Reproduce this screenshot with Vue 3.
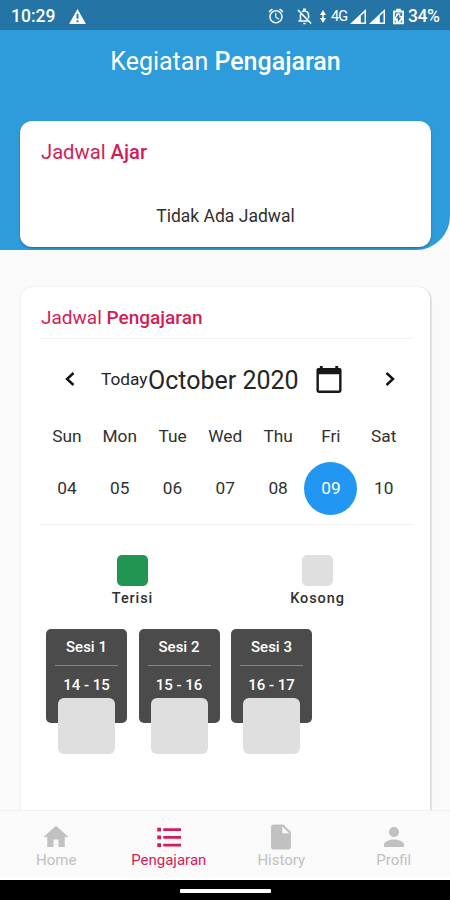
<script setup>
const days = [
  { name: 'Sun', date: '04' },
  { name: 'Mon', date: '05' },
  { name: 'Tue', date: '06' },
  { name: 'Wed', date: '07' },
  { name: 'Thu', date: '08' },
  { name: 'Fri', date: '09', active: true },
  { name: 'Sat', date: '10' },
]
const sessions = [
  { name: 'Sesi 1', time: '14 - 15' },
  { name: 'Sesi 2', time: '15 - 16' },
  { name: 'Sesi 3', time: '16 - 17' },
]
const tabs = [
  { label: 'Home', icon: 'M10 20v-6h4v6h5v-8h3L12 3 2 12h3v8z' },
  {
    label: 'Pengajaran',
    active: true,
    icon: 'M2.600 4.500h3v3h-3zM7.400 4.900h14.200v2.200H7.400zM2.600 10.700h3v3h-3zM7.400 11.100h14.200v2.200H7.400zM2.600 16.900h3v3h-3zM7.400 17.300h14.200v2.200H7.400z',
  },
  { label: 'History', icon: 'M6 2c-1.100 0-2 .9-2 2v16c0 1.100.9 2 2 2h12c1.100 0 2-.9 2-2V8l-6-6H6zm7 7V3.500L18.500 9H13z' },
  { label: 'Profil', icon: 'M12 12c2.210 0 4-1.790 4-4s-1.790-4-4-4-4 1.790-4 4 1.790 4 4 4zm0 2c-2.670 0-8 1.340-8 4v2h16v-2c0-2.660-5.330-4-8-4z' },
]
</script>

<template>
  <div class="screen">
    <div class="status">
      <span class="clock">10:29</span>
      <svg class="warn" viewBox="0 0 18 16"><path d="M9 0 18 16H0z" fill="#fff" /><path d="M8 5h2v5.500H8zM8 12h2v2H8z" fill="#2474a6" /></svg>
      <span class="grow"></span>
      <svg class="alarm" viewBox="0 0 24 24"><path d="M22 5.720l-4.600-3.860-1.290 1.530 4.600 3.860L22 5.720zM7.880 3.390L6.600 1.860 2 5.710l1.290 1.530 4.590-3.850zM12.500 8H11v6l4.750 2.850.75-1.230-4-2.370V8zM12 4c-4.970 0-9 4.030-9 9s4.020 9 9 9a9 9 0 0 0 0-18zm0 16c-3.870 0-7-3.130-7-7s3.130-7 7-7 7 3.130 7 7-3.130 7-7 7z" /></svg>
      <svg class="bell" viewBox="0 0 18 18" fill="none" stroke="#fff" stroke-width="1.600"><path d="M4.700 6.500v7M2.500 13.800h10.500M6.500 4Q7.300 3.300 8.200 3.100V1.300h1.600v1.800q3.500.8 3.500 4.500v3.500M2 2l14 14.500M7.800 16.300h2.400" /></svg>
      <svg class="data" viewBox="0 0 6 13"><path d="M3 0 6 5H0zM3 13 0 8h6zM2.300 4h1.400v5H2.300z" /></svg>
      <span class="net">4G</span>
      <svg v-for="n in 2" :key="n" class="signal" :class="'signal-' + n" viewBox="0 0 16 15"><path d="M0 15 16 0v15zM10.800 7v6.500h3.700V3.500z" fill-rule="evenodd" /></svg>
      <svg class="battery" viewBox="0 0 12 17"><path d="M3.500 0h5v2H11q1 0 1 1v13q0 1-1 1H1q-1 0-1-1V3q0-1 1-1h2.500zM2 4v6l2-5h4v3h2V4zM6.800 5.500 3 10.500h2.300v4L9 9.500H6.800zM2 12v3h1.500zM10 12l-2 3h2z" fill-rule="evenodd" /></svg>
      <span class="percent">34%</span>
    </div>

    <header class="hero">
      <h1>Kegiatan <b>Pengajaran</b></h1>
      <section class="card today-card">
        <h2 class="ajar">Jadwal <b>Ajar</b></h2>
        <p>Tidak Ada Jadwal</p>
      </section>
    </header>

    <main>
      <section class="card schedule">
        <h2 class="teach">Jadwal <b>Pengajaran</b></h2>
        <div class="calendar">
          <div class="month">
            <svg class="chevron" viewBox="0 0 10 14"><path d="M8.500 1 2 7l6.500 6" /></svg>
            <span class="today">Today</span>
            <span class="title">October 2020</span>
            <svg class="cal-icon" viewBox="0 0 26 28"><path d="M3.500 0h3v2h13V0h3v2H24q2 0 2 2v21.500q0 2.500-2.500 2.500h-21Q0 28 0 25.500V4q0-2 2-2h1.500zM2.500 8.500v17h21v-17z" fill-rule="evenodd" /></svg>
            <svg class="chevron next" viewBox="0 0 10 14"><path d="M1.500 1 8 7l-6.500 6" /></svg>
          </div>
          <div class="week">
            <div v-for="d in days" :key="d.name" class="day">
              <span class="name">{{ d.name }}</span>
              <span class="date" :class="{ active: d.active }">{{ d.date }}</span>
            </div>
          </div>
        </div>
        <div class="legend">
          <div><i class="filled"></i><span>Terisi</span></div>
          <div><i></i><span>Kosong</span></div>
        </div>
        <div class="sessions">
          <div v-for="s in sessions" :key="s.name" class="session">
            <span class="s-name">{{ s.name }}</span>
            <span class="s-time">{{ s.time }}</span>
            <i></i>
          </div>
        </div>
      </section>
    </main>

    <nav>
      <div v-for="t in tabs" :key="t.label" class="tab" :class="{ active: t.active }">
        <svg viewBox="0 0 24 24"><path :d="t.icon" /></svg>
        <span>{{ t.label }}</span>
      </div>
    </nav>
    <div class="system"><i></i></div>
  </div>
</template>

<style>
body { margin: 0; }
</style>

<style scoped>
* { box-sizing: border-box; }
.screen {
  width: 450px; height: 900px; display: flex; flex-direction: column; overflow: hidden;
  background: #fafafa; color: #303030; font-family: Roboto, sans-serif; white-space: nowrap;
}
svg { flex: none; display: block; }
.status {
  height: 30px; flex: none; display: flex; align-items: center; padding: 2px 9px 0 11px;
  background: #2474a6; color: #fff; fill: #fff;
}
.clock { font-size: 17.500px; font-weight: 500; width: 58px; }
.warn { width: 17px; height: 15px; }
.grow { flex: 1; }
.alarm { width: 18px; height: 18px; margin-right: 11px; }
.bell { width: 17px; height: 17px; margin-right: 7px; }
.data { width: 6px; height: 13px; margin-right: 5px; }
.net { font-size: 14.500px; width: 19px; letter-spacing: -1px; }
.signal { width: 16px; height: 15px; margin-right: 3px; }
.signal-2 { margin-right: 8px; }
.battery { width: 11px; height: 17px; margin-right: 4px; }
.percent { font-size: 17.500px; font-weight: 500; width: 33px; letter-spacing: -0.5px; }
.hero {
  height: 220px; flex: none; padding: 13px 19px 0 20px; background: #2e9bdb;
  border-bottom-right-radius: 34px;
}
h1 { margin: 0; height: 78px; line-height: 38px; font-size: 25px; font-weight: 400; color: #fff; text-align: center; }
h1 b, h2 b { font-weight: 500; }
.card { background: #fff; border-radius: 12px; }
.today-card { height: 126px; padding: 18px 21px; box-shadow: 0 1px 2px rgba(0, 0, 0, 0.35); }
h2 { margin: 0; color: #d31d56; font-weight: 400; line-height: 26px; }
.ajar { font-size: 20.200px; }
.teach { font-size: 19px; padding-left: 1px; }
.today-card p { margin: 38px 0 0; text-align: center; font-size: 17.500px; line-height: 26px; }
main { flex: 1; min-height: 0; padding: 37px 20px 0 21px; overflow: hidden; }
.schedule { height: 560px; padding: 18px 18px 0 19px; box-shadow: 0 0 2px rgba(0, 0, 0, 0.12), 2px 1px 1px rgba(0, 0, 0, 0.09); }
.calendar { margin-top: 7px; height: 187px; border-top: 1px solid #f2f2f2; border-bottom: 1px solid #f2f2f2; }
.month { height: 82px; display: flex; align-items: center; padding: 0 17px 2px 25px; color: #262626; }
.chevron { width: 10px; height: 14px; fill: none; stroke: #111; stroke-width: 2.400; }
.today { font-size: 17.300px; width: 48px; margin-left: 26px; }
.title { font-size: 25px; width: 151px; margin: 2px 0 0 -1px; }
.cal-icon { width: 26px; height: 27px; margin-left: 17px; fill: #181818; }
.next { margin-left: auto; }
.week { display: grid; grid-template-columns: repeat(7, 52.800px); padding-left: 0.500px; }
.day { display: flex; flex-direction: column; align-items: center; font-size: 17.300px; }
.name { height: 41px; line-height: 30px; }
.date { width: 53px; height: 53px; line-height: 53px; border-radius: 50%; text-align: center; }
.date.active { background: #2196f3; color: #fff; }
.legend { display: grid; grid-template-columns: 1fr 1fr; margin: 30px 2px 0 0; height: 74px; }
.legend div { display: flex; flex-direction: column; align-items: center; }
.legend i { width: 31px; height: 31px; border-radius: 5px; background: #dfdfdf; }
.legend .filled { background: #219653; }
.legend span { font-size: 14.500px; font-weight: 500; line-height: 26px; letter-spacing: 0.9px; }
.sessions { display: flex; gap: 11.500px; padding-left: 6px; }
.session {
  width: 81px; height: 94px; border-radius: 5px; background: #4b4b4b; color: #fff;
  display: flex; flex-direction: column; align-items: center; font-size: 15px; font-weight: 500;
}
.s-name { width: 63px; height: 37px; line-height: 37px; border-bottom: 1px solid #858585; text-align: center; flex: none; }
.s-time { height: 31.500px; line-height: 38px; flex: none; }
.session i { width: 57px; height: 56px; flex: none; border-radius: 6px; background: #dfdfdf; }
nav { height: 67px; flex: none; display: grid; grid-template-columns: repeat(4, 1fr); background: #fafafa; border-top: 1px solid #f1f1f1; }
.tab { display: flex; flex-direction: column; align-items: center; padding-top: 11px; color: #c1c1c1; fill: #c1c1c1; }
.tab svg { width: 30px; height: 30px; }
.tab span { font-size: 15px; line-height: 17px; }
.tab.active { color: #d31d56; fill: #d31d56; }
.system { height: 23px; flex: none; border-top: 3px solid #fff; background: #000; display: flex; justify-content: center; }
.system i { width: 91px; height: 4px; margin-top: 9px; border-radius: 1px; background: #fff; }
</style>
